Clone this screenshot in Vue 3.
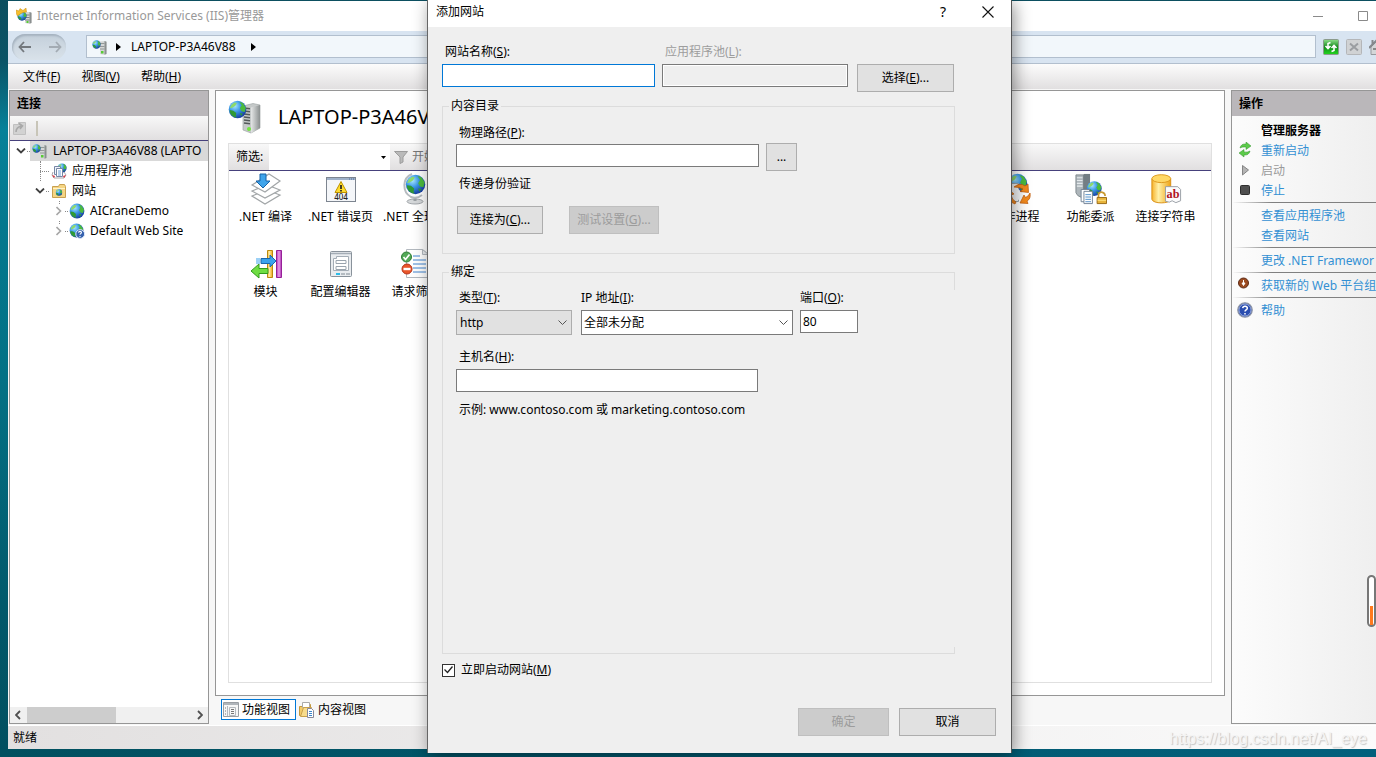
<script setup>
import { ref } from 'vue'

const siteName = ref('')
const physicalPath = ref('')
const hostName = ref('')
const port = ref('80')
const autoStart = ref(true)

const menus = [
  { text: '文件', key: 'F' },
  { text: '视图', key: 'V' },
  { text: '帮助', key: 'H' },
]

const tree = [
  { depth: 0, text: 'LAPTOP-P3A46V88 (LAPTO', icon: 'server', state: 'open', selected: true },
  { depth: 1, text: '应用程序池', icon: 'pool', state: 'leaf' },
  { depth: 1, text: '网站', icon: 'folder', state: 'open' },
  { depth: 2, text: 'AICraneDemo', icon: 'globe', state: 'closed' },
  { depth: 2, text: 'Default Web Site', icon: 'globe-help', state: 'closed' },
]

const features = [
  { col: 1, row: 1, text: '.NET 编译', icon: 'compile' },
  { col: 2, row: 1, text: '.NET 错误页', icon: 'error-page' },
  { col: 3, row: 1, text: '.NET 全球化', icon: 'globalization' },
  { col: 11, row: 1, text: '工作进程', icon: 'worker' },
  { col: 12, row: 1, text: '功能委派', icon: 'delegation' },
  { col: 13, row: 1, text: '连接字符串', icon: 'database' },
  { col: 1, row: 2, text: '模块', icon: 'modules' },
  { col: 2, row: 2, text: '配置编辑器', icon: 'config' },
  { col: 3, row: 2, text: '请求筛选', icon: 'request-filter' },
]

const actionGroups = [
  [
    { text: '重新启动', icon: 'restart' },
    { text: '启动', icon: 'play', disabled: true },
    { text: '停止', icon: 'stop' },
  ],
  [{ text: '查看应用程序池' }, { text: '查看网站' }],
  [{ text: '更改 .NET Framewor' }],
  [{ text: '获取新的 Web 平台组', icon: 'download' }],
  [{ text: '帮助', icon: 'help' }],
]
</script>

<template>
  <div class="desktop">
    <svg class="defs" aria-hidden="true">
      <defs>
        <radialGradient id="g-globe" cx="0.35" cy="0.3" r="0.75">
          <stop offset="0" stop-color="#a6e6ff" />
          <stop offset="0.45" stop-color="#3c98e6" />
          <stop offset="1" stop-color="#14389e" />
        </radialGradient>
        <linearGradient id="g-metal" x1="0" x2="1" y1="0" y2="0">
          <stop offset="0" stop-color="#e4e6e6" />
          <stop offset="1" stop-color="#8b9090" />
        </linearGradient>
        <linearGradient id="g-gold" x1="0" x2="1" y1="0" y2="0">
          <stop offset="0" stop-color="#f7b32c" />
          <stop offset="0.35" stop-color="#fff0a8" />
          <stop offset="1" stop-color="#efa414" />
        </linearGradient>
        <linearGradient id="g-green" x1="0" x2="0" y1="0" y2="1">
          <stop offset="0" stop-color="#8fe08a" />
          <stop offset="0.5" stop-color="#138a1b" />
          <stop offset="1" stop-color="#22d81e" />
        </linearGradient>
        <linearGradient id="g-purple" x1="0" x2="1" y1="0" y2="0">
          <stop offset="0" stop-color="#b02fb5" />
          <stop offset="0.5" stop-color="#e9a0ea" />
          <stop offset="1" stop-color="#a82aad" />
        </linearGradient>
        <symbol id="i-globe" viewBox="0 0 16 16">
          <circle cx="8" cy="8" r="7.4" fill="url(#g-globe)" />
          <path d="M9.500 1.500l3 1 2.500 4-1 3.500-2.500-.5L10 7l1.500-2.500z" fill="#4cbb3c" />
          <path d="M1.500 8.500l3 .5 2.500 2-.5 2.500 1 1.500Q2.500 14 1.500 10z" fill="#2f9a35" />
          <path d="M3 4l2.500-2 2 .5L6 5 3.500 6.500 1.500 7z" fill="#8ed96a" />
          <path d="M10 11l2.500.5-1.500 2z" fill="#2f9a35" />
        </symbol>
        <symbol id="i-globe-help" viewBox="0 0 16 16">
          <use href="#i-globe" width="15" height="15" />
          <circle cx="11.200" cy="11" r="4.400" fill="#3561ae" stroke="#dce8f8" />
          <path d="M9.500 9.600c.3-1.800 3.200-1.500 2.900.1-.2 1-1.400 1-1.400 2.100M11 13v1" fill="none" stroke="#fff" stroke-width="1.100" />
        </symbol>
        <symbol id="i-server" viewBox="0 0 16 16">
          <path d="M8 2.500l5-.5 1.500.8V15l-3 .8L8 15z" fill="#d4d7d6" />
          <path d="M12.500 2l2 .8V15l-2 .8z" fill="#8b9090" />
          <path d="M8 4.500h4.500M8 7.500h4.500M8 10h4.500" stroke="#8c9191" stroke-width=".9" />
          <rect x="9" y="12" width="2.500" height="2.500" fill="#57cb34" />
          <use href="#i-globe" width="9" height="9" x="0" y="1" />
        </symbol>
        <symbol id="i-app" viewBox="0 0 16 16">
          <path d="M9 4h5l1.500.8V15l-3 .8L9 15z" fill="#d4d7d6" />
          <path d="M13.500 4l2 .8V15l-2 .8z" fill="#8b9090" />
          <path d="M9 7h4.500M9 9.500h4.500M9 12h4.500" stroke="#747a7a" stroke-width=".9" />
          <rect x="10.500" y="13" width="2" height="2" fill="#57cb34" />
          <use href="#i-globe" width="10" height="10" x="1" y="3" />
          <path d="M.5 6L0 2l3 1L4 .5l3 2L10 0l.5 4L7 4.500 4 6 1.500 8z" fill="#f6be2c" stroke="#c88a10" stroke-width=".5" />
        </symbol>
        <symbol id="i-pool" viewBox="0 0 16 16">
          <use href="#i-globe" x="6" width="10" height="10" />
          <path d="M2 9l-1 3 2 3h10l2-3-2-3" fill="none" stroke="#a7a7ae" />
          <path d="M1 12l2 3 1-2zM15 12l-2 3-1-2z" fill="#d5313c" />
          <path d="M3.500 3.500h6v8h-6z" fill="#f0f4fa" stroke="#7687a5" />
          <path d="M5.500 5.500h6v8h-6z" fill="#fff" stroke="#7687a5" />
          <path d="M7 8h3M7 10h3M7 12h3" stroke="#6a9fd6" />
        </symbol>
        <symbol id="i-folder" viewBox="0 0 16 16">
          <path d="M1.500 3.500h6l1-2h5l1 2v11h-13z" fill="#f5d583" stroke="#c9a050" />
          <path d="M2 5.500h12" stroke="#fff3c9" />
          <use href="#i-globe" x="4.500" y="6" width="7" height="7" />
        </symbol>
        <symbol id="i-server-lg" viewBox="0 0 34 34">
          <path d="M15 6l10-2.500 7 1.500v23l-9 5-8-3z" fill="#c5c9c9" stroke="#a2a7a7" stroke-width=".7" />
          <path d="M23 7.500l9-2.500v23l-9 5z" fill="url(#g-metal)" />
          <path d="M16 8l6 .8M16 11l6 .8M16 14l6 .8M16 17l6 .8M16 20l6 .8M16 23l6 .8" stroke="#53595a" stroke-width="1.500" />
          <circle cx="21" cy="29" r="2" fill="#71e63d" />
          <use href="#i-globe" width="19" height="19" />
        </symbol>
        <symbol id="i-compile" viewBox="0 0 32 32">
          <g fill="#fff" stroke="#a2a6a8" stroke-width="1.200">
            <path d="M2 23l15-6 13 5-15 9z" />
            <path d="M2 18l15-6 13 5-15 8z" />
            <path d="M2 12L19 1l11 7-15 11z" />
          </g>
          <path d="M10 1h6v7h4l-7 7-7-7h4z" fill="#3fa4ea" stroke="#1763a8" />
        </symbol>
        <symbol id="i-error-page" viewBox="0 0 32 32">
          <rect x="1.500" y="4.500" width="29" height="24" fill="#f4f6f9" stroke="#7d8590" />
          <path d="M2 6h28" stroke="#9fb1c9" stroke-width="2" />
          <path d="M24 6h6" stroke="#4c6a98" stroke-dasharray="1 1" />
          <path d="M16 8.500L22 19.500H10z" fill="#ffdc2e" stroke="#bd9200" stroke-linejoin="round" />
          <path d="M16 12v4M16 17v1.500" stroke="#222" stroke-width="1.700" />
          <text x="16" y="27" text-anchor="middle" font-family="Noto Sans" font-size="8" font-weight="500" fill="#222">404</text>
        </symbol>
        <symbol id="i-globalization" viewBox="0 0 32 32">
          <ellipse cx="15" cy="28.500" rx="8" ry="2.500" fill="#d5d8da" stroke="#a1a6aa" />
          <path d="M15 24v4" stroke="#9aa0a4" stroke-width="3" />
          <path d="M12 1C2 5 2 19 11 24c4 1.500 8 .5 11-2" fill="none" stroke="#b7bcc0" stroke-width="2" />
          <use href="#i-globe" x="5" y="1" width="21" height="21" />
        </symbol>
        <symbol id="i-worker" viewBox="0 0 32 32">
          <use href="#i-globe" x="7" y="0" width="21" height="21" />
          <path d="M4.500 10.500h14v18h-14z" fill="#f4f6f7" stroke="#9aa6ad" />
          <path d="M12 18q5 2 8 8" fill="none" stroke="#f4f6f7" stroke-width="10" />
          <path d="M14 14q6-5 11-1l3-2 .5 8.500-8.500-1 3-2.500q-4-2-9-2zM30 20q1 6-3 8l1 2.500-8-.5 4-8 1.500 2.500q3-1 4.500-4.500zM8 16l6 5-3 1q1 5 5 7l-1 2q-8-3-8-9l-3 .5z" fill="#f38a1d" stroke="#bb5808" stroke-width=".7" />
        </symbol>
        <symbol id="i-delegation" viewBox="0 0 34 32">
          <path d="M1 1h8v25l-6-3-2-3z" fill="#aeb6bb" stroke="#7d868b" />
          <path d="M9 0h7v25H9z" fill="#737e84" />
          <path d="M2 4h6M2 7h6M2 10h6M2 13h6" stroke="#e6ebed" stroke-width="1.200" />
          <use href="#i-globe" x="12" y="7" width="17" height="17" />
          <path d="M6.500 16.500h9v13h-9z" fill="#fff" stroke="#718194" />
          <path d="M9.500 18.500h9v13h-9z" fill="#fff" stroke="#718194" />
          <path d="M11 22h6M11 24.500h6M11 27h6M11 29.500h6" stroke="#4e8cc8" />
          <path d="M25 25v-3q.500-3 4-2.500 3 .5 3 4" fill="none" stroke="#c99a32" stroke-width="1.800" />
          <path d="M23.500 25h10v6.500h-10z" fill="#e7b33a" stroke="#986812" />
          <path d="M24 28h9" stroke="#ffe789" />
        </symbol>
        <symbol id="i-database" viewBox="0 0 34 32">
          <path d="M2 5v22c1 5 19 5 20 0V5" fill="url(#g-gold)" stroke="#d98e12" />
          <ellipse cx="12" cy="5" rx="10" ry="4.200" fill="#ffd866" stroke="#dc961b" />
          <path d="M16.500 13.500h13l3 3v12l-5 2-4-2-3 1.500-4-1z" fill="#fbfbfc" stroke="#979da4" />
          <text x="24.500" y="26" text-anchor="middle" font-family="Liberation Serif" font-size="13" font-weight="bold" fill="#b0141c">ab</text>
        </symbol>
        <symbol id="i-modules" viewBox="0 0 32 32">
          <path d="M17.500 2.500h5v27h-5z" fill="url(#g-gold)" stroke="#bb8a0d" />
          <path d="M26.500 2.500h5v27h-5z" fill="url(#g-purple)" stroke="#962098" />
          <path d="M11 10.500h9V7l6 6-6 6v-3.500h-9z" fill="#3aa2ec" stroke="#1b67ac" />
          <path d="M7 10v6M9 10v6" stroke="#3aa2ec" />
          <path d="M18 20.500H9V16l-8 7 8 7v-4.500h9z" fill="#6fdd43" stroke="#329b1d" />
        </symbol>
        <symbol id="i-config" viewBox="0 0 32 32">
          <rect x="5.500" y="3.500" width="21" height="25" rx="1" fill="#e9ecef" stroke="#89929b" />
          <path d="M6 5.500h20" stroke="#a4adb6" stroke-width="1.500" />
          <path d="M8.500 10.500h3v-2h12v14h-15z" fill="#fff" stroke="#a4adb6" />
          <path d="M11 12.500h10v3H11zM11 18.500h10v3H11z" fill="none" stroke="#9aa4ae" />
          <path d="M11 26h4" stroke="#2cbce9" stroke-width="2" />
          <path d="M16 26h4M21 26h4" stroke="#b4bbc1" stroke-width="2" />
        </symbol>
        <symbol id="i-request-filter" viewBox="0 0 32 32">
          <path d="M6.500 1.500h16l6 5v23h-22z" fill="#fff" stroke="#b3b9bf" />
          <path d="M22.500 1.500v5h6z" fill="#e8ebee" stroke="#b3b9bf" />
          <path d="M13 8h7M13 12h13M13 16h13M13 20h13M13 24h13" stroke="#4084d0" />
          <circle cx="6.500" cy="9" r="5" fill="#54a957" stroke="#2f7e36" />
          <path d="M3.500 9l2 2.500 4-5" fill="none" stroke="#fff" stroke-width="1.700" />
          <circle cx="7" cy="21" r="5" fill="#e9562a" stroke="#b5331b" />
          <path d="M3.500 21h7" stroke="#fff" stroke-width="2.400" />
        </symbol>
        <symbol id="i-restart" viewBox="0 0 16 16">
          <path d="M3 6q1-4.500 6-4V0l5 4-5 3.500V5Q5 4.500 3 6zM13 9q-1 4.500-6 4V15l-5-4 5-3.500V10q4 .5 6-1z" fill="#5ccb4a" stroke="#30922a" stroke-width=".5" />
        </symbol>
        <symbol id="i-play" viewBox="0 0 16 16">
          <path d="M5.500 3.500L11.500 8l-6 5z" fill="#b4b4b4" stroke="#858585" />
        </symbol>
        <symbol id="i-stop" viewBox="0 0 16 16">
          <rect x="3.500" y="3.500" width="9" height="9" rx="1" fill="#4e4e4e" stroke="#2e2e2e" />
        </symbol>
        <symbol id="i-download" viewBox="0 0 16 16">
          <circle cx="6.500" cy="6" r="5" fill="#9a4a20" stroke="#5d2b16" />
          <path d="M6.500 3v4M5 6l1.500 2.500L8 6z" fill="#fff" stroke="#fff" />
        </symbol>
        <symbol id="i-help" viewBox="0 0 16 16">
          <circle cx="8" cy="8" r="7.200" fill="#2b4eb0" stroke="#8d94a5" stroke-width="1.300" />
          <circle cx="8" cy="8" r="6" fill="none" stroke="#bac8ee" stroke-width=".7" />
          <path d="M5.700 6.200c.3-2.700 5-2.400 4.600.2-.2 1.500-2.300 1.600-2.300 3.200M8 11v1.600" fill="none" stroke="#fff" stroke-width="1.500" />
        </symbol>
      </defs>
    </svg>

    <main class="window">
      <header class="titlebar">
        <svg class="i16"><use href="#i-app" /></svg>
        <span class="grow">Internet Information Services (IIS)管理器</span>
        <button class="plain winbtn" aria-label="最小化">
          <svg width="10" height="10"><path d="M0 5.500h10" stroke="#8a8a8a" /></svg>
        </button>
        <button class="plain winbtn" aria-label="最大化">
          <svg width="10" height="10"><path d="M.5.500h9v9h-9z" fill="none" stroke="#8a8a8a" /></svg>
        </button>
      </header>

      <nav class="address">
        <div class="pill">
          <button class="plain" aria-label="后退">
            <svg width="13" height="12"><path d="M6 1L1.500 6 6 11M1.500 6H13" fill="none" stroke="#73787d" stroke-width="1.800" /></svg>
          </button>
          <button class="plain" aria-label="前进">
            <svg width="13" height="12"><path d="M7 1l4.500 5L7 11M11.500 6H0" fill="none" stroke="#a3abb3" stroke-width="1.800" /></svg>
          </button>
        </div>
        <div class="crumbs">
          <svg class="i16"><use href="#i-server" /></svg>
          <svg class="crumb-arrow" width="5" height="8"><path d="M0 0l5 4-5 4z" /></svg>
          <a href="#">LAPTOP-P3A46V88</a>
          <svg class="crumb-arrow" width="5" height="8"><path d="M0 0l5 4-5 4z" /></svg>
        </div>
        <div class="nav-tools">
          <button class="plain" aria-label="刷新">
            <svg width="16" height="16">
              <rect x=".5" y=".5" width="15" height="15" rx="1" fill="url(#g-green)" stroke="#8b9a8b" />
              <path d="M7.500 3.500L5 4.500V9M2.500 7L5 9.500 7.500 7M8.500 12.500L11 11.500V7M8.500 9L11 6.500 13.500 9" fill="none" stroke="#fff" stroke-width="1.600" />
            </svg>
          </button>
          <button class="plain" aria-label="停止" disabled>
            <svg width="16" height="16">
              <rect x=".5" y=".5" width="15" height="15" rx="1" fill="#d0d2d4" stroke="#b4b6b9" />
              <path d="M4 4.500l8 7M12 4.500l-8 7" stroke="#9a9da1" stroke-width="2" />
            </svg>
          </button>
          <button class="plain" aria-label="主页">
            <svg width="16" height="16">
              <path d="M2 8v7.500h12V8L8 2z" fill="#d4d6d8" stroke="#96999d" />
              <path d="M0 9l8-8 8 8M3.500 5V1" fill="none" stroke="#85888c" stroke-width="2" />
              <path d="M4 10h3" stroke="#888" stroke-width="2" />
            </svg>
          </button>
        </div>
      </nav>

      <nav class="menubar">
        <button v-for="m in menus" :key="m.key" class="plain">{{ m.text }}(<u>{{ m.key }}</u>)</button>
      </nav>

      <div class="workspace">
        <section class="pane connections">
          <h2>连接</h2>
          <div class="pane-tools">
            <svg class="i16">
              <path d="M1.500 4.500h5v-2h7v12h-12z" fill="#d2d2d2" stroke="#c0c0c0" />
              <path d="M4 12q0-5 6-6M7 3.500L10.500 6 8 9" fill="none" stroke="#a8a8a8" stroke-width="1.600" />
            </svg>
            <i></i>
          </div>
          <div class="tree" role="tree">
            <div
              v-for="n in tree"
              :key="n.text"
              class="node"
              :class="[`d${n.depth}`, n.state]"
              role="treeitem"
              :aria-selected="!!n.selected"
            >
              <span class="toggle">
                <svg v-if="n.state === 'open'" width="10" height="6"><path d="M1 .5l4 4 4-4" fill="none" stroke="#404040" stroke-width="1.800" /></svg>
                <svg v-if="n.state === 'closed'" width="6" height="10"><path d="M.5 1l4 4-4 4" fill="none" stroke="#a6a6a6" stroke-width="1.600" /></svg>
              </span>
              <span class="node-body" :class="{ selected: n.selected }">
                <svg class="i16"><use :href="`#i-${n.icon}`" /></svg>
                <span>{{ n.text }}</span>
              </span>
            </div>
          </div>
          <div class="hscroll">
            <svg width="6" height="10"><path d="M5 1L1 5l4 4" fill="none" stroke="#505050" stroke-width="1.800" /></svg>
            <div class="track"><div class="thumb"></div></div>
            <svg width="6" height="10"><path d="M1 1l4 4-4 4" fill="none" stroke="#505050" stroke-width="1.800" /></svg>
          </div>
        </section>

        <div class="center">
          <section class="pane home">
            <h1>
              <svg width="34" height="34"><use href="#i-server-lg" /></svg>
              LAPTOP-P3A46V88
            </h1>
            <div class="features">
              <div class="filter">
                <label for="filter">筛选:</label>
                <span class="combo">
                  <input id="filter" type="text" />
                  <svg width="5" height="3"><path d="M0 0h5L2.500 3z" /></svg>
                </span>
                <button class="plain go">
                  <svg width="14" height="14"><path d="M.5 1.500h13L9 7v5l-3 1.500V7z" fill="#bababa" stroke="#9c9c9c" /></svg>
                  开始
                </button>
              </div>
              <div class="grid">
                <a
                  v-for="f in features"
                  :key="f.text"
                  href="#"
                  class="feature"
                  :style="{ gridColumn: f.col, gridRow: f.row }"
                >
                  <svg width="32" height="32"><use :href="`#i-${f.icon}`" /></svg>
                  <span>{{ f.text }}</span>
                </a>
              </div>
            </div>
          </section>
          <div class="tabs">
            <button class="plain tab active">
              <svg class="i16">
                <path d="M.5.500h15v14H.5z" fill="#f6f6f6" stroke="#9a9ea3" />
                <path d="M1 2h14" stroke="#b0b5ba" stroke-width="2" />
                <path d="M4.500 4v10M6.500 5.500h6v8h-6z" stroke="#b6babf" fill="none" />
                <path d="M2 6h1M2 9h1M2 12h1M8 7.500h3M8 9.500h3M8 11.500h3" stroke="#777" />
              </svg>
              功能视图
            </button>
            <button class="plain tab">
              <svg class="i16">
                <path d="M.5 13.500v-9h3l1-2h7v11z" fill="#f3cb68" stroke="#c2983d" />
                <path d="M3.500.500h7v5h-7z" fill="#fff" stroke="#aaa" />
                <path d="M1.500 14.500l3-9h8v9z" fill="#f8dc8c" stroke="#c9a14b" />
                <path d="M8.500 6.500h4l2 2v7h-6z" fill="#fff" stroke="#889" />
                <path d="M10 9.500h3M10 11.500h3M10 13.500h3" stroke="#3c86cc" />
              </svg>
              内容视图
            </button>
          </div>
        </div>

        <aside class="pane actions">
          <h2>操作</h2>
          <div class="action-list">
            <h3>管理服务器</h3>
            <ul v-for="(g, i) in actionGroups" :key="i">
              <li v-for="a in g" :key="a.text">
                <svg v-if="a.icon" class="i16"><use :href="`#i-${a.icon}`" /></svg>
                <span v-else class="i16"></span>
                <a v-if="!a.disabled" href="#">{{ a.text }}</a>
                <span v-else class="disabled">{{ a.text }}</span>
              </li>
            </ul>
          </div>
        </aside>
      </div>

      <footer class="status">就绪</footer>
    </main>

    <form class="dialog" role="dialog" aria-labelledby="dlg-title" @submit.prevent>
      <header class="dlg-title">
        <span id="dlg-title" class="grow">添加网站</span>
        <button type="button" class="plain question" aria-label="帮助">?</button>
        <button type="button" class="plain" aria-label="关闭">
          <svg width="12" height="12"><path d="M.5.500l11 11M11.500.500l-11 11" stroke="#111" stroke-width="1.100" /></svg>
        </button>
      </header>
      <div class="dlg-body">
        <div class="line names">
          <div class="field name">
            <label for="site">网站名称(<u>S</u>):</label>
            <input id="site" v-model="siteName" class="box focus" type="text" />
          </div>
          <div class="field pool">
            <label for="pool" class="dim">应用程序池(<u>L</u>):</label>
            <input id="pool" class="box" type="text" disabled />
          </div>
          <button type="button" class="btn">选择(<u>E</u>)...</button>
        </div>

        <fieldset class="content-dir">
          <legend>内容目录</legend>
          <label class="cap" for="path">物理路径(<u>P</u>):</label>
          <div class="line path">
            <input id="path" v-model="physicalPath" class="box" type="text" />
            <button type="button" class="btn browse" aria-label="浏览">...</button>
          </div>
          <div class="cap auth">传递身份验证</div>
          <div class="line auth-buttons">
            <button type="button" class="btn connect-as">连接为(<u>C</u>)...</button>
            <button type="button" class="btn test" disabled>测试设置(<u>G</u>)...</button>
          </div>
        </fieldset>

        <fieldset class="binding">
          <legend>绑定</legend>
          <div class="line bind-row">
            <div class="field type">
              <label for="type">类型(<u>T</u>):</label>
              <span class="select">
                <select id="type" class="gray"><option>http</option><option>https</option></select>
                <svg width="9" height="6"><path d="M.5.500l4 4 4-4" fill="none" stroke="#555" /></svg>
              </span>
            </div>
            <div class="field ip">
              <label for="ip">IP 地址(<u>I</u>):</label>
              <span class="select">
                <select id="ip"><option>全部未分配</option></select>
                <svg width="9" height="6"><path d="M.5.500l4 4 4-4" fill="none" stroke="#555" /></svg>
              </span>
            </div>
            <div class="field port">
              <label for="port">端口(<u>O</u>):</label>
              <input id="port" v-model="port" class="box" type="text" />
            </div>
          </div>
          <label class="cap host-label" for="host">主机名(<u>H</u>):</label>
          <input id="host" v-model="hostName" class="box host" type="text" />
          <p class="cap example">示例: www.contoso.com 或 marketing.contoso.com</p>
        </fieldset>

        <label class="check">
          <span class="tick">
            <input v-model="autoStart" type="checkbox" />
            <svg v-if="autoStart" width="9" height="8"><path d="M.5 3.500l3 3 5-6" fill="none" stroke="#222" stroke-width="1.300" /></svg>
          </span>
          <span>立即启动网站(<u>M</u>)</span>
        </label>

        <div class="dlg-buttons">
          <button type="submit" class="btn ok" disabled>确定</button>
          <button type="button" class="btn cancel">取消</button>
        </div>
      </div>
    </form>

    <div class="gauge"><div></div></div>
    <div class="watermark">https://blog.csdn.net/AI_eye</div>
  </div>
</template>

<style>
body {
  overflow: hidden;
}
</style>

<style scoped>
* {
  box-sizing: border-box;
}
.desktop {
  position: relative;
  height: 100vh;
  padding: 1px 0 8px 8px;
  overflow: hidden;
  background:
    linear-gradient(90deg, #01505f, #02607c) bottom / 100% 8px no-repeat,
    linear-gradient(#0c4f60 0, #0a5366 8%, #068199 17%, #04788e 30%, #037185 50%, #02596b 80%, #014f5f 100%);
  font: 12px/16px 'Noto Sans', 'Noto Sans CJK SC', sans-serif;
  color: #000;
}
.defs {
  position: absolute;
  width: 0;
  height: 0;
}
svg {
  display: block;
  flex: none;
}
.i16 {
  flex: none;
  width: 16px;
  height: 16px;
}
.grow {
  flex: 1;
}
input,
select,
button {
  font: inherit;
  color: inherit;
}
a {
  color: inherit;
  text-decoration: none;
}
h1,
h2,
h3,
ul,
p {
  margin: 0;
  padding: 0;
  list-style: none;
}
u {
  text-underline-offset: 1px;
}
.plain {
  padding: 0;
  border: 0;
  background: none;
}

.window {
  display: flex;
  flex-direction: column;
  height: 100%;
  background: #f7f7f7;
  white-space: nowrap;
}
.titlebar {
  display: flex;
  align-items: center;
  height: 30px;
  padding: 0 8px;
  gap: 5px;
  background: #fff;
  color: #999;
}
.winbtn + .winbtn {
  margin-left: 30px;
}
.address {
  display: flex;
  align-items: center;
  height: 33px;
  padding: 0 0 1px 4px;
  border-bottom: 1px solid #b2bfce;
  background: #d8e4f1;
}
.pill {
  display: flex;
  align-items: center;
  justify-content: space-between;
  width: 54px;
  height: 26px;
  padding: 0 4px 0 6px;
  border-radius: 13px;
  background: linear-gradient(#c3cfda, #d9e2ea);
  box-shadow: inset 1px 2px 2px #a6b3c0;
}
.crumbs {
  display: flex;
  flex: 1;
  align-items: center;
  height: 23px;
  margin-left: 20px;
  padding-left: 5px;
  border: 1px solid #b2bfce;
  background: #f2f7fb;
}
.crumbs a {
  margin-right: 15px;
}
.crumb-arrow {
  margin: 0 10px 0 8px;
}
.crumbs a + .crumb-arrow {
  margin-left: 0;
}
.nav-tools {
  display: flex;
  width: 60px;
  padding-left: 7px;
  gap: 7px;
  overflow: hidden;
}
.nav-tools .plain {
  flex: none;
  height: 20px;
}
.menubar {
  display: flex;
  height: 25px;
  padding-left: 15px;
  gap: 21px;
  background: linear-gradient(#fcfcfc, #e1dfe0);
}

.workspace {
  display: flex;
  flex: 1;
  min-height: 0;
  padding: 1px 0 1px 1px;
  gap: 6px;
}
.pane {
  display: flex;
  flex-direction: column;
  border: 1px solid #969696;
  background: #fff;
}
.pane h2 {
  height: 25px;
  padding-left: 7px;
  background: #bab7ba;
  font-size: 12px;
  font-weight: 700;
  line-height: 25px;
}
.connections {
  width: 200px;
}
.pane-tools {
  display: flex;
  align-items: center;
  height: 25px;
  padding-left: 2px;
  gap: 8px;
  border-bottom: 1px solid #46417c;
  background: linear-gradient(#f8f8f8, #e1dfe0);
}
.pane-tools i {
  width: 2px;
  height: 15px;
  background: #c8c5b8;
}
.tree {
  flex: 1;
  overflow: hidden;
}
.node {
  position: relative;
  display: flex;
  height: 20px;
  padding-left: 1px;
}
.d1 {
  padding-left: 20px;
}
.d2 {
  padding-left: 38px;
}
.toggle {
  position: relative;
  display: flex;
  flex: none;
  align-items: center;
  width: 19px;
  padding-left: 5px;
}
.closed .toggle {
  width: 20px;
  padding-left: 8px;
}
.toggle::after {
  content: '';
  position: absolute;
  right: 0;
  top: 10px;
  width: 3px;
  border-top: 1px dotted #888;
}
.leaf .toggle::after {
  width: 9px;
}
.leaf .toggle::before {
  content: '';
  position: absolute;
  left: 10px;
  top: 0;
  height: 20px;
  border-left: 1px dotted #888;
}
.closed .toggle::before {
  content: '';
  position: absolute;
  left: 11px;
  top: 0;
  height: 3px;
  border-left: 1px dotted #888;
}
.node-body {
  display: flex;
  flex: 1;
  align-items: center;
  padding-left: 2px;
  gap: 5px;
}
.closed .node-body {
  padding-left: 1px;
}
.selected {
  background: #d9d9d9;
}
.hscroll {
  display: flex;
  align-items: center;
  height: 16px;
  padding: 0 5px;
  gap: 6px;
  background: #f0f0f0;
}
.track {
  flex: 1;
  height: 16px;
}
.thumb {
  width: 54%;
  height: 100%;
  background: #cdcdcd;
}

.center {
  display: flex;
  flex: 1;
  flex-direction: column;
  min-width: 0;
  padding-bottom: 4px;
  gap: 3px;
}
.home {
  flex: 1;
  padding: 0 12px 12px;
}
h1 {
  display: flex;
  align-items: center;
  height: 52px;
  padding-bottom: 1px;
  gap: 16px;
  font-size: 20px;
  font-weight: 400;
}
.features {
  flex: 1;
  border: 1px solid #e0e0e0;
  overflow: hidden;
}
.filter {
  display: flex;
  height: 27px;
  border-bottom: 1px solid #46417c;
  background: linear-gradient(#f8f8f8, #e1dfe0);
  line-height: 26px;
}
.filter label {
  width: 40px;
  padding-left: 7px;
}
.combo {
  display: flex;
  align-items: center;
  width: 121px;
  padding-right: 4px;
  background: #fff;
}
.combo input {
  flex: 1;
  min-width: 0;
  height: 20px;
  border: 0;
  outline: 0;
}
.go {
  display: flex;
  align-items: center;
  padding-left: 4px;
  gap: 4px;
  color: #777;
}
.grid {
  display: grid;
  grid-template-columns: repeat(auto-fill, 75px);
  grid-auto-rows: 75px;
  margin-left: -1px;
}
.feature {
  display: flex;
  flex-direction: column;
  align-items: center;
  padding-top: 2px;
}
.feature span {
  margin-top: 4px;
}
.tabs {
  display: flex;
  gap: 1px;
  padding-left: 6px;
}
.tab {
  display: flex;
  align-items: center;
  height: 21px;
  padding: 0 5px 0 1px;
  gap: 3px;
  border: 1px solid transparent;
}
.tab.active {
  border-color: #0078d7;
  background: #fff;
}
.actions {
  width: 145px;
  border-right: 0;
  overflow: hidden;
}
.action-list {
  flex: 1;
  padding-top: 4px;
  background: linear-gradient(90deg, #fcfcfc, #efefef);
}
.actions h3 {
  height: 20px;
  padding-left: 29px;
  font-size: 12px;
  line-height: 22px;
}
.actions ul + ul {
  padding-top: 5px;
  background: linear-gradient(90deg, transparent, #808080 40px) 0 2px / 100% 1px no-repeat;
}
.actions li {
  display: flex;
  align-items: center;
  height: 20px;
  padding-left: 5px;
  gap: 8px;
  color: #3390d3;
}
.actions li > a,
.disabled {
  padding-top: 2px;
}
.disabled {
  color: #9a9a9a;
}
.status {
  height: 24px;
  padding-left: 5px;
  border-top: 1px solid #fff;
  background: linear-gradient(90deg, #e2e0e0, #fbfbfb);
  line-height: 23px;
}

.dialog {
  position: absolute;
  top: 0;
  bottom: 4px;
  left: 428px;
  display: flex;
  flex-direction: column;
  width: 584px;
  border-right: 1px solid #555;
  background: #efefef;
  box-shadow: -1px 0 #666, 2px 3px 16px rgba(0, 0, 0, 0.45);
  white-space: nowrap;
}
.dlg-title {
  display: flex;
  height: 27px;
  padding: 0 17px 4px 8px;
  align-items: center;
  background: #fff;
}
.question {
  margin-right: 36px;
  font-size: 14px;
}
.dlg-body {
  display: flex;
  flex: 1;
  flex-direction: column;
  padding: 17px 56px 17px 14px;
}
.line {
  display: flex;
}
.field {
  display: flex;
  flex-direction: column;
}
.field label {
  height: 20px;
  padding-left: 3px;
}
.dim {
  color: #9d9d9d;
}
.box {
  width: 100%;
  height: 23px;
  padding: 0 2px;
  border: 1px solid #7a7a7a;
  border-radius: 0;
  outline: 0;
  background: #fff;
}
.box.focus {
  border-color: #0078d7;
}
.box:disabled {
  background: #efefef;
  box-shadow: inset 0 0 0 1px #fff;
}
.btn {
  height: 28px;
  padding: 0;
  border: 1px solid #adadad;
  background: #e1e1e1;
}
.btn:disabled {
  border-color: #bfbfbf;
  background: #ccc;
  color: #9c9c9c;
}
.names .name {
  width: 213px;
  margin-right: 7px;
}
.names .pool {
  width: 186px;
  margin-right: 9px;
}
.names .btn {
  width: 97px;
  margin-top: 20px;
}
fieldset {
  min-width: 0;
  margin: 0;
  padding: 0 13px;
  border: 1px solid #dcdcdc;
}
legend {
  height: 16px;
  margin-left: -7px;
  padding: 0 2px;
}
.content-dir {
  height: 156px;
  margin-top: 6px;
}
.cap {
  display: block;
  padding-left: 3px;
}
.content-dir > label {
  margin-top: 11px;
}
.path {
  margin-top: 2px;
  gap: 7px;
}
.path .box {
  width: 303px;
  margin-top: 1px;
}
.browse {
  width: 31px;
}
.auth {
  margin-top: 5px;
}
.auth-buttons {
  margin-top: 14px;
  padding-left: 1px;
  gap: 26px;
}
.connect-as {
  width: 86px;
}
.test {
  width: 90px;
}
.binding {
  flex: 1;
  margin-top: 10px;
  border-right: 0;
  background:
    linear-gradient(#dcdcdc, #dcdcdc) right top / 1px 17px no-repeat,
    linear-gradient(#dcdcdc, #dcdcdc) right bottom / 1px 6px no-repeat;
}
.bind-row {
  margin-top: 10px;
}
.bind-row .type {
  width: 116px;
  margin-right: 9px;
}
.bind-row .ip {
  width: 212px;
  margin-right: 7px;
}
.bind-row .port {
  width: 58px;
}
.bind-row .ip label,
.bind-row .port label {
  padding-left: 0;
}
.select {
  position: relative;
}
.select svg {
  position: absolute;
  top: 10px;
  right: 5px;
  pointer-events: none;
}
select {
  display: block;
  width: 100%;
  height: 25px;
  padding: 0 2px;
  border: 1px solid #7a7a7a;
  border-radius: 0;
  background: #fff;
  appearance: none;
}
select.gray {
  padding: 0 3px;
  border-color: #adadad;
  background: #e1e1e1;
}
.host-label {
  margin-top: 14px;
}
.host {
  display: block;
  width: 302px;
  margin-top: 4px;
}
.example {
  margin-top: 10px;
}
.check {
  display: flex;
  align-items: center;
  height: 16px;
  margin-top: 8px;
  gap: 6px;
}
.tick {
  display: grid;
  place-items: center;
}
.tick > * {
  grid-area: 1 / 1;
}
.tick input {
  width: 13px;
  height: 13px;
  margin: 0;
  border: 1px solid #333;
  background: #fff;
  appearance: none;
}
.tick svg {
  pointer-events: none;
}
.dlg-buttons {
  display: flex;
  justify-content: flex-end;
  margin: 30px -41px 0 0;
  gap: 10px;
}
.ok {
  width: 91px;
}
.cancel {
  width: 97px;
}

.gauge {
  position: absolute;
  right: 0;
  top: 575px;
  display: flex;
  align-items: flex-end;
  width: 9px;
  height: 52px;
  padding: 0 1px;
  border: 2px solid #777;
  border-radius: 5px;
  background: #fff;
}
.gauge div {
  width: 100%;
  height: 40%;
  background: #ff7a1e;
}
.watermark {
  position: absolute;
  right: 9px;
  bottom: 7px;
  font: 16px/22px 'Liberation Sans', sans-serif;
  color: #f4f4f4;
  text-shadow: 1px 1px 1px #c4c4c4;
}
</style>
